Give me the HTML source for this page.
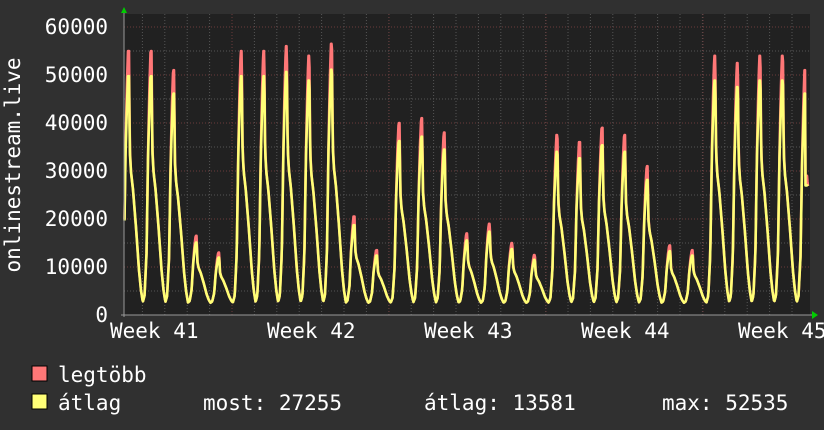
<!DOCTYPE html>
<html><head><meta charset="utf-8"><style>
html,body{margin:0;padding:0;background:#303030;}
svg{display:block}
text{font-family:"DejaVu Sans Mono","Liberation Mono",monospace;fill:#fff;font-size:21px}
</style></head><body>
<svg id="s" width="824" height="430" xmlns="http://www.w3.org/2000/svg">
<rect width="824" height="430" fill="#303030"/>
<rect x="124" y="14" width="686" height="301" fill="#212121"/>
<g id="grid"></g>
<g id="data"></g>
<line x1="124" y1="12" x2="124" y2="317" stroke="#999" stroke-width="1"/>
<line x1="121" y1="315" x2="814" y2="315" stroke="#999" stroke-width="1"/>
<polygon points="121,13 127,13 124,7" fill="#0c0"/>
<polygon points="812,311 812,319 818,315" fill="#0c0"/>
<g text-anchor="end">
<text x="108" y="34">60000</text>
<text x="108" y="82">50000</text>
<text x="108" y="130">40000</text>
<text x="108" y="178">30000</text>
<text x="108" y="226">20000</text>
<text x="108" y="274">10000</text>
<text x="108" y="322">0</text>
</g>
<text transform="translate(20,165) rotate(-90)" text-anchor="middle">onlinestream.live</text>
<text x="110" y="338">Week 41</text>
<text x="267" y="338">Week 42</text>
<text x="424" y="338">Week 43</text>
<text x="581" y="338">Week 44</text>
<text x="738" y="338">Week 45</text>
<rect x="32" y="366" width="15" height="15" fill="#ff7777" stroke="#000"/>
<rect x="32" y="394" width="15" height="15" fill="#ffff77" stroke="#000"/>
<text x="58" y="382">legtöbb</text>
<text x="58" y="410">átlag</text>
<text x="203" y="410">most: 27255</text>
<text x="424" y="410">átlag: 13581</text>
<text x="662" y="410">max: 52535</text>
</svg>
<script>
var ns="http://www.w3.org/2000/svg",g=document.getElementById('grid'),d=document.getElementById('data');
function L(x1,y1,x2,y2,c){var l=document.createElementNS(ns,'line');l.setAttribute('x1',x1);l.setAttribute('y1',y1);l.setAttribute('x2',x2);l.setAttribute('y2',y2);l.setAttribute('stroke',c);l.setAttribute('stroke-dasharray','1,2');g.appendChild(l);}
for(var v=5000;v<=60000;v+=5000){var y=315-v*0.0048;L(124,y,810,y,v%10000==0?'#6a3a3a':'#555');}
for(var x=142.4;x<810;x+=22.4){L(x,14,x,315,'#555');}
[232,389,546,703].forEach(function(x){L(x,14,x,315,'#6a3a3a');});
var peaks=[55,55,51,16.5,13,55,55,56,54,56.5,20.5,13.5,40,41,38,17,19,15,12.5,37.5,36,39,37.5,31,14.5,13.5,54,52.5,54,54,51];
var kt=[-8,-6,-4,-2.5,-1.2,0,1,1.8,3,5,8,11,13,15,16];
var kv=[0,0.03,0.2,0.6,0.85,1,1,0.62,0.52,0.45,0.3,0.13,0.05,0,0];
var ymul=[1,1,1,0.97,0.9,0.9,0.9,0.97,1,1,1,1,1,1,1];
function shape(t,yel){if(t<=kt[0]||t>=kt[kt.length-1])return null;for(var i=0;i<kt.length-1;i++){if(t<kt[i+1]){var f=(t-kt[i])/(kt[i+1]-kt[i]);var a=kv[i],b=kv[i+1];if(yel){a*=ymul[i];b*=ymul[i+1];}return a+(b-a)*f;}}return 0;}
function val(x,yel){var best=2.5;for(var i=0;i<peaks.length;i++){var p=128+i*22.55,t=x-p,s=shape(t,yel);if(s===null)continue;var v=2.5+(peaks[i]-2.5)*s;if(v>best)best=v;}return best;}
function draw(yel,c){var pts=[];for(var x=124.5;x<=808;x+=0.5){var v=val(x,yel);if(x>805)v=Math.min(v,yel?27:29);pts.push(x+','+(315-v*1000*0.0048).toFixed(1));}
 var p=document.createElementNS(ns,'polyline');p.setAttribute('points',pts.join(' '));p.setAttribute('fill','none');p.setAttribute('stroke',c);p.setAttribute('stroke-width','2.6');p.setAttribute('stroke-linejoin','round');d.appendChild(p);}
draw(false,'#ff7777');draw(true,'#ffff77');
</script>
</body></html>
